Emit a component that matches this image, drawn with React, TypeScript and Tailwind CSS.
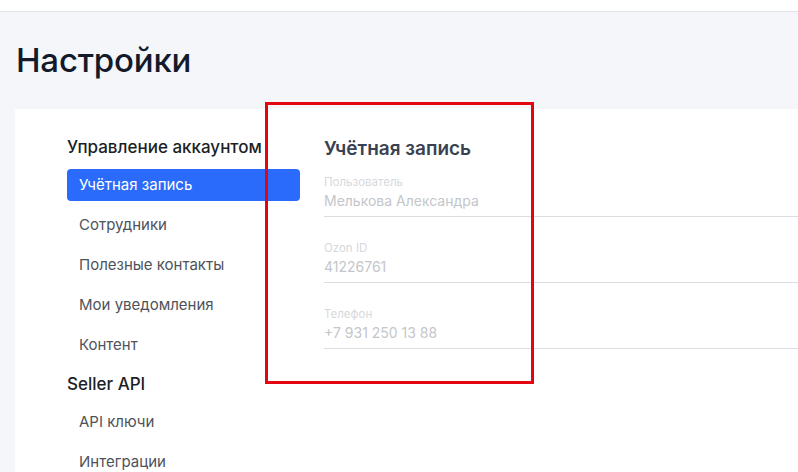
const menu = [
  {
    title: "Управление аккаунтом",
    items: ["Учётная запись", "Сотрудники", "Полезные контакты", "Мои уведомления", "Контент"],
  },
  {
    title: "Seller API",
    items: ["API ключи", "Интеграции"],
  },
];

const fields = [
  { label: "Пользователь", value: "Мелькова Александра" },
  { label: "Ozon ID", value: "41226761" },
  { label: "Телефон", value: "+7 931 250 13 88" },
];

export default function App() {
  const active = "Учётная запись";

  return (
    <div
      className="relative h-[472px] w-[798px] overflow-hidden bg-[#f5f6f9]"
      style={{ fontFamily: "Inter, 'Noto Sans', sans-serif" }}
    >
      {/* верхняя шапка */}
      <div className="h-[12px] border-b border-[#e3e4e9] bg-white" />

      <h1 className="ml-[16px] mt-[28px] h-[40px] text-[33px] font-medium leading-[40px] tracking-[-0.2px] text-[#131a2b]">
        Настройки
      </h1>

      <div className="ml-[15px] mt-[29px] flex h-[400px] gap-[24px] bg-white pl-[52px] pt-[28px]">
        {/* меню настроек */}
        <nav className="flex w-[233px] shrink-0 flex-col gap-[13px]">
          {menu.map((group) => (
            <div key={group.title}>
              <div className="h-[20px] whitespace-nowrap text-[17px] font-medium leading-[20px] text-[#1c1f26]">
                {group.title}
              </div>
              <div className="mt-[12px] flex flex-col gap-[8px]">
                {group.items.map((item) => (
                  <div
                    key={item}
                    className={`flex h-[32px] items-center rounded-[4px] pl-[12px] text-[15px] ${
                      item === active ? "bg-[#2b6bfb] text-white" : "text-[#4e525b]"
                    }`}
                  >
                    {item}
                  </div>
                ))}
              </div>
            </div>
          ))}
        </nav>

        {/* данные аккаунта */}
        <section className="flex-1">
          <h2 className="h-[24px] text-[19px] font-semibold leading-[24px] text-[#3a4252]">
            Учётная запись
          </h2>
          <div className="mt-[14px] flex flex-col gap-[24px]">
            {fields.map((f) => (
              <div key={f.label} className="border-b border-[#dcdde0] pb-[5px]">
                <div className="h-[14px] text-[11.5px] leading-[14px] text-[#d6d8dc]">{f.label}</div>
                <div className="mt-[2px] h-[20px] text-[14px] leading-[20px] text-[#c4c6cb]">
                  {f.value}
                </div>
              </div>
            ))}
          </div>
        </section>
      </div>

      {/* рамка выделения */}
      <div className="pointer-events-none absolute left-[265px] top-[102px] h-[282px] w-[269px] border-[3px] border-[#e30611]" />
    </div>
  );
}
